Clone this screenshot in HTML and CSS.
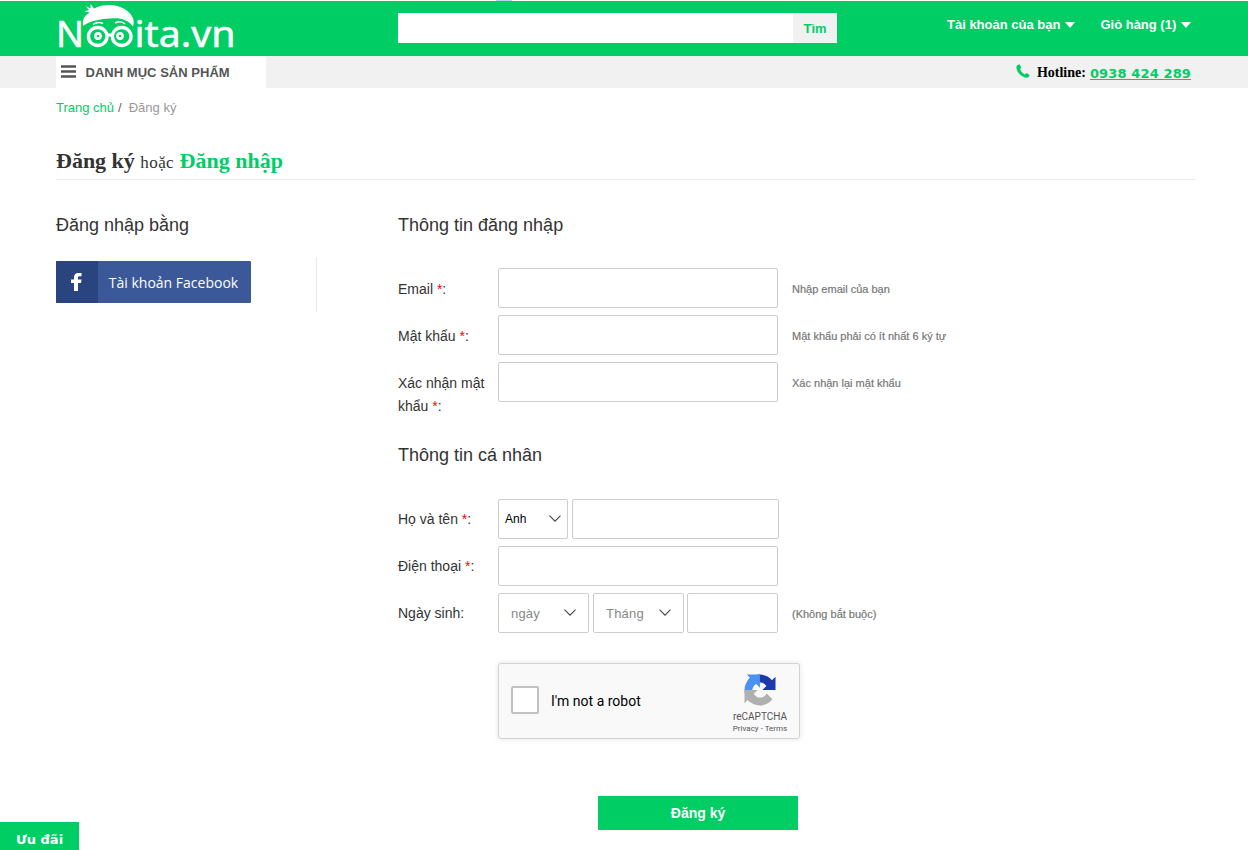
FILE: index.html
```html
<!DOCTYPE html>
<html lang="vi">
<head>
<meta charset="utf-8">
<title>Đăng ký - Nooita.vn</title>
<link rel="stylesheet" href="styles.css">
</head>
<body>
<div class="top-edge"><span class="edge-mark"></span></div>
<header class="header">
  <a class="logo">
    <svg width="182" height="55" viewBox="56 1 182 55">
      <g class="logo-text">
        <text x="56" y="46.500" textLength="28" lengthAdjust="spacingAndGlyphs">N</text>
        <text x="134.500" y="46.500" textLength="101" lengthAdjust="spacingAndGlyphs">ita.vn</text>
      </g>
      <path fill="#fff" d="M83 26C82 19 85 15 90 12.500l-6-1 5-1.500-3.500-4 5 2.500V4l3.500 4.500c12-6 27-4 35 4 5 5 5.500 10 4 14-5-7-13-9-23-8-10 .5-19 2-27 7.500z"/>
      <path fill="none" stroke="#fff" stroke-width="1.400" d="M93 24.500q5-3.500 10-1M115 23q6-3 10 1"/>
      <g fill="none" stroke="#fff">
        <ellipse cx="97.700" cy="36.500" rx="9.300" ry="9" stroke-width="3.400"/><ellipse cx="121.700" cy="36.500" rx="9.300" ry="9" stroke-width="3.400"/>
        <circle cx="98" cy="36" r="2.600" stroke-width="2.600"/><circle cx="120" cy="36" r="2.600" stroke-width="2.600"/>
        <path d="M106 35h7" stroke-width="3"/>
      </g>
    </svg>
  </a>
  <div class="search"><input class="search-input"><button class="search-btn">Tìm</button></div>
  <nav class="account">
    <a><span class="acc-user">Tài khoản của bạn</span><i class="caret"></i></a>
    <a><span class="acc-cart">Giỏ hàng (1)</span><i class="caret"></i></a>
  </nav>
</header>
<div class="subbar">
  <div class="category">
    <svg width="15" height="13" viewBox="0 0 15 13"><path d="M0 1.500h15M0 6.500h15M0 11.500h15" stroke="#555" stroke-width="2.500"/></svg>
    <span>DANH MỤC SẢN PHẨM</span>
  </div>
  <div class="hotline">
    <svg width="14" height="14" viewBox="0 0 14 14"><path fill="#00ce65" d="M3.500.2C1.500.6.300 1.700.400 3.500.800 8.500 5.500 13.200 10.200 13.700c1.900.1 3.200-1 3.400-2.700L10.500 8.900 8.700 10.400C6.700 9.300 5 7.300 4.100 5.200L5.300 3.600z"/></svg>
    <b>Hotline:</b><a>0938 424 289</a>
  </div>
</div>
<main class="page">
  <div class="crumbs"><a>Trang chủ</a><span class="slash">/</span><span class="current">Đăng ký</span></div>
  <h1 class="title"><b>Đăng ký</b><span>hoặc</span><b class="green">Đăng nhập</b></h1>
  <div class="columns">
    <aside class="social">
      <h2>Đăng nhập bằng</h2>
      <div class="social-body">
        <a class="facebook">
          <span class="fb-icon"><svg width="11" height="18" viewBox="0 0 11 18"><path fill="#fff" d="M3 18V10H0V6.600h3V4.500C3 1.500 4.600 0 7.200 0H10.500v3.200H8.600C7.300 3.200 7 3.800 7 4.800v1.800h3.500L10 10H7v8z"/></svg></span>
          <span class="fb-text">Tài khoản Facebook</span>
        </a>
      </div>
    </aside>
    <form class="form">
      <h2>Thông tin đăng nhập</h2>
      <div class="row"><label>Email <em>*</em>:</label><input class="field"><small>Nhập email của bạn</small></div>
      <div class="row"><label>Mật khẩu <em>*</em>:</label><input class="field"><small>Mật khẩu phải có ít nhất 6 ký tự</small></div>
      <div class="row tall"><label>Xác nhận mật khẩu <em>*</em>:</label><input class="field"><small>Xác nhận lại mật khẩu</small></div>
      <h2 class="personal-title">Thông tin cá nhân</h2>
      <div class="row personal"><label>Họ và tên <em>*</em>:</label>
        <div class="select salutation"><span>Anh</span><svg class="chev" viewBox="0 0 12 7"><path d="M.5.7L6 6.200 11.500.7"/></svg></div><input class="field name"></div>
      <div class="row personal"><label>Điện thoại <em>*</em>:</label><input class="field"></div>
      <div class="row personal"><label>Ngày sinh:</label>
        <div class="birth">
          <div class="select date"><span>ngày</span><svg class="chev" viewBox="0 0 12 7"><path d="M.5.7L6 6.200 11.500.7"/></svg></div>
          <div class="select date"><span>Tháng</span><svg class="chev" viewBox="0 0 12 7"><path d="M.5.7L6 6.200 11.500.7"/></svg></div>
          <input class="field year">
        </div><small>(Không bắt buộc)</small></div>
      <div class="captcha">
        <span class="check"></span><span class="robot">I'm not a robot</span>
        <div class="brand">
          <svg width="32" height="32" viewBox="-1 -1 66 66">
            <path fill="#1c3aa9" d="M64 31.955l-.013-1.370V4.687l-7.160 7.160C50.967 4.674 42.033.093 32.030.093c-10.408 0-19.656 4.960-25.497 12.642l11.736 11.860a15.550 15.550 0 0 1 4.754-5.334c2.050-1.600 4.952-2.906 9.008-2.906.490 0 .868.057 1.146.165 5.025.397 9.380 3.170 11.945 7.194l-8.307 8.307L64 31.953"/>
            <path fill="#4a90f5" d="M31.862.094l-1.370.013H4.594l7.160 7.160C4.580 13.147 0 22.080 0 32.083c0 10.408 4.960 19.656 12.642 25.497l11.860-11.736a15.550 15.550 0 0 1-5.334-4.754c-1.600-2.050-2.906-4.952-2.906-9.008 0-.490.057-.868.165-1.146.397-5.025 3.170-9.380 7.194-11.945l8.307 8.307-.066-27.204"/>
            <path fill="#b0b0b0" d="M.001 32.045l.013 1.370v25.898l7.160-7.160c5.860 7.173 14.794 11.754 24.798 11.754 10.408 0 19.656-4.960 25.497-12.642l-11.736-11.860a15.550 15.550 0 0 1-4.754 5.334c-2.050 1.600-4.952 2.906-9.008 2.906-.490 0-.868-.057-1.146-.165-5.025-.397-9.380-3.170-11.945-7.194l8.307-8.307-27.204.066"/>
          </svg>
          <span class="re">reCAPTCHA</span><span class="privacy">Privacy - Terms</span>
        </div>
      </div>
      <button class="submit" type="button">Đăng ký</button>
    </form>
  </div>
</main>
<a class="offer">Ưu đãi</a>
</body>
</html>
```
FILE: styles.css
```css
* { box-sizing: border-box; }
body { margin: 0; height: 850px; overflow: hidden; background: #fff; font-family: "Liberation Sans", Arial, sans-serif; color: #333; }
input, button { font: inherit; border: 0; margin: 0; padding: 0; border-radius: 0; }
.top-edge { height: 1px; padding-left: 496px; }
.edge-mark { display: block; width: 16px; height: 1px; background: #add8e6; }
.header { height: 55px; background: #00ce65; padding: 0 56px; display: flex; align-items: flex-start; }
.logo { width: 342px; height: 55px; }
.logo svg { display: block; overflow: visible; }
.logo-text { font-family: "Noto Sans", sans-serif; font-size: 37px; fill: #fff; stroke: #fff; stroke-width: .5px; }
.search { display: flex; width: 439px; height: 30px; margin-top: 12px; }
.search-input { width: 395px; background: #fff; }
.search-btn { width: 44px; background: #f1f1f1; color: #00ce65; font-size: 13px; font-weight: bold; }
.account { display: flex; gap: 25px; margin: 16px 0 0 110px; font-size: 13px; font-weight: bold; line-height: 16px; color: #fff; white-space: nowrap; }
.account a { display: flex; align-items: center; gap: 5px; }
.caret { border: 5.500px solid transparent; border-top: 6px solid #fff; border-bottom: 0; }
.subbar { height: 32px; background: #f1f1f1; padding: 0 57px 0 56px; display: flex; justify-content: space-between; }
.category { width: 210px; padding: 0 0 2px 5px; background: #fff; display: flex; align-items: center; gap: 9.500px; font-size: 13px; font-weight: bold; color: #555; white-space: nowrap; }
.category span { padding-top: 2px; letter-spacing: .03px; }
.hotline { display: flex; align-items: center; font-size: 14px; color: #000; }
.hotline svg { margin: 0 7px 2px 0; }
.hotline b { font-family: "Liberation Serif", serif; margin-right: 4px; padding-top: 2px; }
.hotline a { font: bold 13px "DejaVu Sans", sans-serif; color: #00ce65; text-decoration: underline; padding-top: 2px; letter-spacing: .13px; }
.page { padding: 0 52px 0 56px; }
.crumbs { height: 38px; padding-top: 10px; font-size: 13px; line-height: 19px; color: #999; }
.crumbs a { color: #00ce65; }
.slash { color: #666; margin: 0 7px 0 4px; }
.title { height: 54px; margin: 0; border-bottom: 1px solid #ebebeb; font: 22px/26px "Liberation Serif", serif; padding-top: 22px; display: flex; align-items: baseline; gap: 5.500px; white-space: nowrap; }
.title span { font-size: 17px; letter-spacing: .4px; }
.green { color: #00ce65; }
.columns { display: flex; }
.social { width: 342px; }
h2 { font-size: 18px; font-weight: normal; line-height: 24px; height: 55px; margin: 0; white-space: nowrap; }
.social h2, .form h2:first-child { margin-top: 33px; }
.social h2 { height: 44px; }
.personal-title { height: 56px; }
.social-body { width: 261px; height: 55px; padding-top: 4px; border-right: 1px solid #e8e8e8; }
.facebook { display: flex; width: 195px; height: 42px; background: #3b5998; color: #fff; border-radius: 1px; overflow: hidden; }
.fb-icon { width: 42px; background: #29447e; display: flex; align-items: center; justify-content: center; padding-right: 2px; }
.fb-text { flex: 1; text-align: center; padding-right: 2px; line-height: 43px; font-family: "Open Sans", sans-serif; font-size: 14px; white-space: nowrap; }
.row { display: flex; height: 47px; font-size: 14px; white-space: nowrap; }
.row label { width: 100px; padding: 10px 10px 0 0; line-height: 23px; white-space: normal; }
.row em { color: red; font-style: normal; }
.row small { font-size: 11px; color: #777; margin-left: 14px; line-height: 42px; -webkit-text-stroke: .2px #777; }
.row.tall { height: 81px; }
.row.personal label { padding-top: 9px; }
.field { width: 280px; height: 40px; border: 1px solid #d0cccc; border-radius: 2px; background: #fff; }
.select { height: 40px; border: 1px solid #d0cccc; border-radius: 2px; display: flex; align-items: center; justify-content: space-between; }
.chev { width: 12px; height: 7px; margin-bottom: 2px; fill: none; stroke: #444; stroke-width: 1.100; }
.salutation { width: 70px; padding: 0 6px; margin-right: 4px; font-size: 12px; color: #000; }
.name { width: 207px; }
.birth { display: flex; width: 280px; }
.date { width: 91px; margin-right: 4px; padding: 0 12px; font-size: 13px; color: #888; letter-spacing: .2px; }
.date + .date { margin-right: 3px; }
.year { width: 91px; }
.captcha { width: 302px; height: 76px; margin: 23px 0 0 100px; padding: 0 11px 0 12px; display: flex; align-items: center; border: 1px solid #d3d3d3; border-radius: 3px; background: #f9f9f9; box-shadow: 0 0 4px 1px rgba(0,0,0,.08); }
.check { width: 28px; height: 28px; border: 2px solid #c1c1c1; border-radius: 2px; background: #fff; margin: -2px 12px 0 0; }
.robot { font-family: Roboto, sans-serif; font-size: 14px; color: #000; }
.brand { width: 56px; margin-left: auto; padding-top: 6px; display: flex; flex-direction: column; align-items: center; font-family: Roboto, sans-serif; color: #555; white-space: nowrap; }
.re { font-size: 10px; line-height: 12px; margin-top: 5px; }
.privacy { font-size: 8px; line-height: 10px; margin-top: 1px; }
.submit { display: block; width: 200px; height: 34px; margin: 57px 0 0 200px; background: #00ce65; color: #fff; font-size: 14px; font-weight: bold; }
.offer { position: fixed; left: 0; bottom: 0; width: 79px; height: 28px; background: #00ce65; color: #fff; text-align: center; font: bold 13px/35px "DejaVu Sans", sans-serif; }
```
